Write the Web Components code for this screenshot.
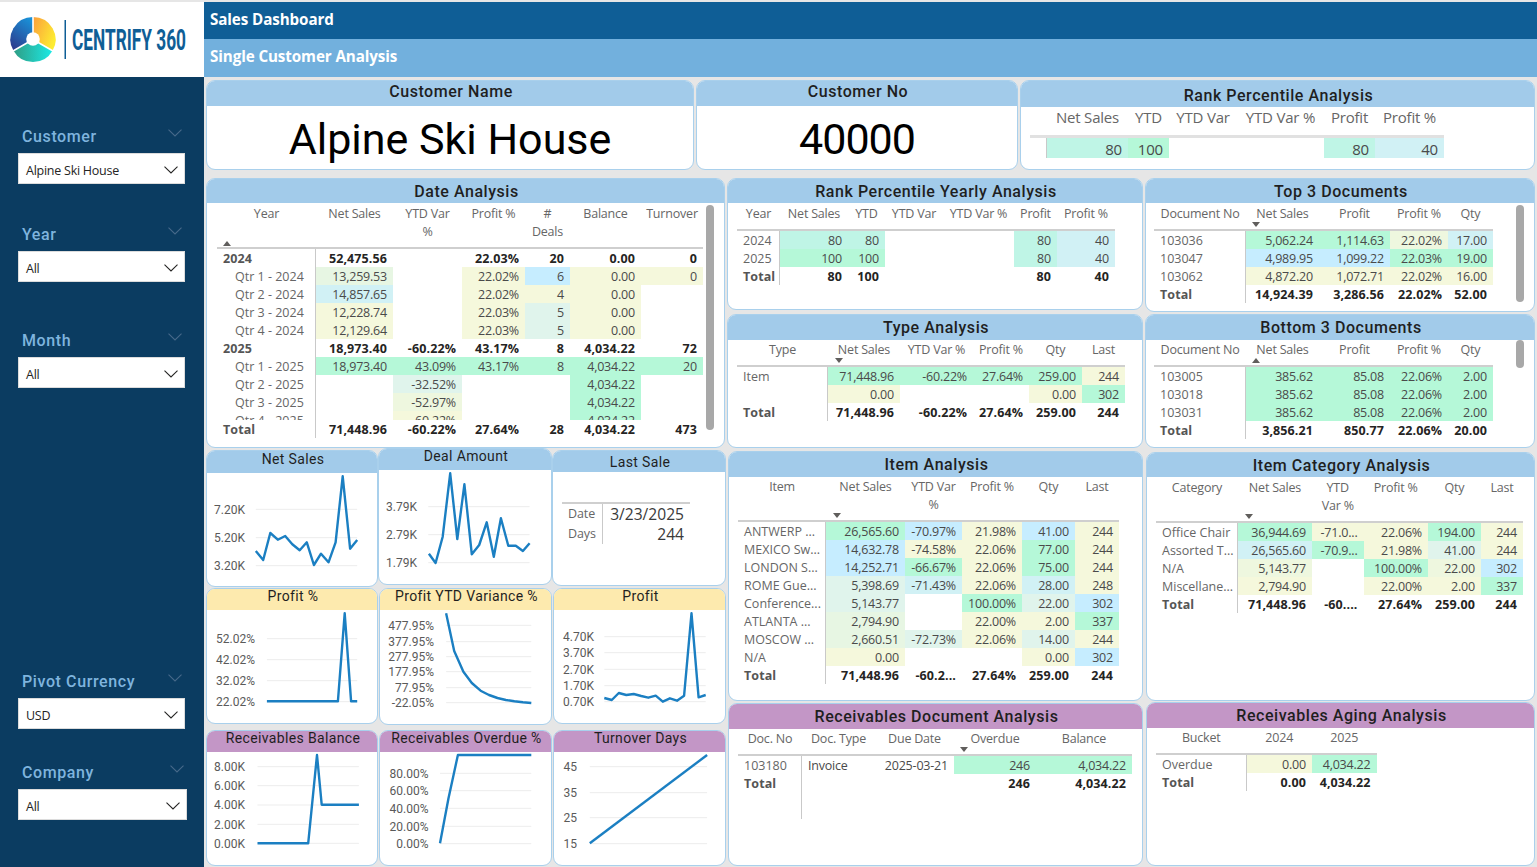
<!DOCTYPE html>
<html lang="en"><head><meta charset="utf-8"><title>Sales Dashboard</title>
<style>
html,body{margin:0;height:867px;width:1537px;overflow:hidden;background:#e6e6e6}
</style></head><body>
<dash-app>
  <side-bar slot="side">
    <slicer-box label="Customer" value="Alpine Ski House" style="margin-top:49px"></slicer-box>
    <slicer-box label="Year" value="All" style="margin-top:40px"></slicer-box>
    <slicer-box label="Month" value="All" style="margin-top:48px"></slicer-box>
    <slicer-box label="Pivot Currency" value="USD" style="margin-top:283px"></slicer-box>
    <slicer-box label="Company" value="All" wide style="margin-top:33px"></slicer-box>
  </side-bar>
  <title-band slot="title" main="Sales Dashboard" sub="Single Customer Analysis"></title-band>

  <dash-row slot="content" cols="488px 322px 515px" style="margin-top:3px;height:90px">
    <bi-card title="Customer Name" head="25" title-y="-2"><big-value>Alpine Ski House</big-value></bi-card>
    <bi-card title="Customer No" head="25" title-y="-2"><big-value style="letter-spacing:-1px">40000</big-value></bi-card>
    <bi-card title="Rank Percentile Analysis" head="26" title-y="1"><bi-table name="rank" style="margin:0 0 0 9px"></bi-table></bi-card>
  </dash-row>

  <dash-row slot="content" cols="519px 416px 390px" style="margin-top:8px;margin-left:0;height:688px">
    <dash-col>
      <bi-card title="Date Analysis" head="24" style="height:270px"><bi-table name="date" style="margin:0 0 0 10px" ></bi-table></bi-card>
      <chart-grid>
        <bi-card title="Net Sales" head="22" fs="14" title-y="-3" style="margin-top:2px;height:137px"><line-chart name="netSales"></line-chart></bi-card>
        <bi-card title="Deal Amount" head="21" fs="14" title-y="-4" style="height:137px"><line-chart name="deal"></line-chart></bi-card>
        <bi-card title="Last Sale" head="21" fs="14" style="margin-top:2px;height:136px"><last-sale></last-sale></bi-card>
        <bi-card title="Profit %" tone="yellow" head="21" fs="14" title-y="-4" style="margin-top:1px;height:136px"><line-chart name="profitPct"></line-chart></bi-card>
        <bi-card title="Profit YTD Variance %" tone="yellow" head="21" fs="14" title-y="-4" style="margin:1px 0 0 1px;height:137px"><line-chart name="ytdVar"></line-chart></bi-card>
        <bi-card title="Profit" tone="yellow" head="21" fs="14" title-y="-4" style="margin:1px 0 0 1px;height:136px"><line-chart name="profit"></line-chart></bi-card>
        <bi-card title="Receivables Balance" tone="purple" head="21" fs="14" title-y="-4" style="margin-top:5px;height:136px"><line-chart name="recvBal"></line-chart></bi-card>
        <bi-card title="Receivables Overdue %" tone="purple" head="21" fs="14" title-y="-4" style="margin:5px 0 0 1px;height:136px"><line-chart name="overdue"></line-chart></bi-card>
        <bi-card title="Turnover Days" tone="purple" head="21" fs="14" title-y="-4" style="margin:5px 0 0 1px;height:136px"><line-chart name="turnover"></line-chart></bi-card>
      </chart-grid>
    </dash-col>
    <dash-col>
      <bi-card title="Rank Percentile Yearly Analysis" head="24" style="height:132px"><bi-table name="yearly" style="margin:0 0 0 9px"></bi-table></bi-card>
      <bi-card title="Type Analysis" head="25" style="margin-top:4px;height:134px"><bi-table name="type" style="margin:0 0 0 9px"></bi-table></bi-card>
      <bi-card title="Item Analysis" head="25" style="margin:3px 0 0 1px;height:250px"><bi-table name="item" style="margin:0 0 0 9px"></bi-table></bi-card>
      <bi-card title="Receivables Document Analysis" tone="purple" head="25" style="margin:2px 0 0 1px;height:163px"><bi-table name="recvDoc" style="margin:0 0 0 9px"></bi-table></bi-card>
    </dash-col>
    <dash-col>
      <bi-card title="Top 3 Documents" head="24" style="height:134px"><bi-table name="top3" style="margin:0 0 0 8px"></bi-table></bi-card>
      <bi-card title="Bottom 3 Documents" head="25" style="margin-top:2px;height:134px"><bi-table name="bottom3" style="margin:0 0 0 8px"></bi-table></bi-card>
      <bi-card title="Item Category Analysis" head="24" style="margin:4px 0 0 1px;height:249px"><bi-table name="category" style="margin:0 0 0 9px"></bi-table></bi-card>
      <bi-card title="Receivables Aging Analysis" tone="purple" head="25" style="margin:1px 0 0 1px;height:164px"><bi-table name="aging" style="margin:0 0 0 9px"></bi-table></bi-card>
    </dash-col>
  </dash-row>
</dash-app>

<script>
const TITLE_FONT='Roboto, "Liberation Sans", sans-serif';
const BODY_FONT='"Open Sans", "Noto Sans", sans-serif';
const PAL={g:'#b5f8d8',t:'#bff5e6',b:'#c6edff',c:'#d1f1f5',m:'#e0f4ec',e:'#e7f6e3',n:'#eef7df',y:'#f5f8dc'};

const TABLES={
 date:{cols:[99,77,69,63,45,71,62],hh:46,hp:2,arB:1,bodyH:171,arrow:[0,'up',6],sb:[489,2,8,225],
  head:['Year','Net Sales','YTD Var<br>%','Profit %','#<br>Deals','Balance','Turnover'],
  rows:['*2024;52,475.56;;22.03%;20;0.00;0','>Qtr 1 - 2024;13,259.53:e;;22.02%:y;6:b;0.00:y;0:y','>Qtr 2 - 2024;14,857.65:c;;22.02%:y;4:y;0.00:y;','>Qtr 3 - 2024;12,228.74:y;;22.03%:y;5:m;0.00:y;','>Qtr 4 - 2024;12,129.64:y;;22.03%:y;5:m;0.00:y;',
   '*2025;18,973.40;-60.22%;43.17%;8;4,034.22;72','>Qtr 1 - 2025;18,973.40:g;43.09%:g;43.17%:g;8:g;4,034.22:g;20:g','>Qtr 2 - 2025;;-32.52%:m;;;4,034.22:g;','>Qtr 3 - 2025;;-52.97%:n;;;4,034.22:g;','>Qtr 4 - 2025;;-60.22%:y;;;4,034.22:g;'],
  total:'Total;71,448.96;-60.22%;27.64%;28;4,034.22;473'},
 rank:{cols:[17,81,41,68,87,51,69],hh:31,hp:0,fs:15,rh:20,lineC:'#e1e1e1',lineW:3,noSep:1,
  head:['','Net Sales','YTD','YTD Var','YTD Var %','Profit','Profit %'],
  rows:[';80:t;100:g;;;80:t;40:c']},
 yearly:{cols:[43,68,37,58,71,43,58],hh:28,hp:2,
  head:['Year','Net Sales','YTD','YTD Var','YTD Var %','Profit','Profit %'],
  rows:['2024;80:t;80:t;;;80:t;40:c','2025;100:g;100:g;;;80:t;40:c'],total:'Total;80;100;;;80;40'},
 top3:{cols:[92,73,71,58,45],hh:28,hp:2,arrow:[1,'down',6],sb:[362,2,8,97],
  head:['Document No','Net Sales','Profit','Profit %','Qty'],
  rows:['103036;5,062.24:g;1,114.63:g;22.02%:n;17.00:c','103047;4,989.95:b;1,099.22:b;22.03%:g;19.00:g','103062;4,872.20:y;1,072.71:y;22.02%:y;16.00:y'],total:'Total;14,924.39;3,286.56;22.02%;52.00'},
 bottom3:{cols:[92,73,71,58,45],hh:27,arrow:[1,'up',6],sb:[362,0,8,28],
  head:['Document No','Net Sales','Profit','Profit %','Qty'],
  rows:['103005;385.62:g;85.08:g;22.06%:g;2.00:g','103018;385.62:g;85.08:g;22.06%:g;2.00:g','103031;385.62:g;85.08:g;22.06%:g;2.00:g'],total:'Total;3,856.21;850.77;22.06%;20.00'},
 type:{cols:[91,72,73,56,53,43],hh:27,arrow:[1,'down',7],
  head:['Type','Net Sales','YTD Var %','Profit %','Qty','Last'],
  rows:['Item;71,448.96:g;-60.22%:g;27.64%:g;259.00:g;244:y',';0.00:y;;;0.00:y;302:g'],total:'Total;71,448.96;-60.22%;27.64%;259.00;244'},
 item:{cols:[88,79,57,60,53,44],hh:45,arrow:[1,'down',7],
  head:['Item','Net Sales','YTD Var<br>%','Profit %','Qty','Last'],
  rows:['ANTWERP ...;26,565.60:g;-70.97%:b;21.98%:y;41.00:b;244:y','MEXICO Sw...;14,632.78:b;-74.58%:y;22.06%:y;77.00:g;244:y','LONDON S...;14,252.71:b;-66.67%:g;22.06%:y;75.00:g;244:y','ROME Gue...;5,398.69:m;-71.43%:c;22.06%:y;28.00:c;248:y','Conference...;5,143.77:m;;100.00%:g;22.00:m;302:b','ATLANTA ...;2,794.90:e;;22.00%:y;2.00:y;337:g','MOSCOW ...;2,660.51:e;-72.73%:m;22.06%:y;14.00:m;244:y','N/A;0.00:y;;;0.00:y;302:b'],
  total:'Total;71,448.96;-60.2...;27.64%;259.00;244'},
 category:{cols:[82,74,51.5,64.5,53,42],hh:46,hp:2,arrow:[1,'down',7],
  head:['Category','Net Sales','YTD<br>Var %','Profit %','Qty','Last'],
  rows:['Office Chair;36,944.69:g;-71.0...:y;22.06%:y;194.00:g;244:y','Assorted T...;26,565.60:c;-70.9...:g;21.98%:y;41.00:m;244:y','N/A;5,143.77:n;;100.00%:g;22.00:n;302:b','Miscellane...;2,794.90:y;;22.00%:y;2.00:y;337:g'],
  total:'Total;71,448.96;-60....;27.64%;259.00;244'},
 recvDoc:{cols:[64,73,79,82,96],hh:27,arrow:[3,'down',6],left:[1],extra:27,
  head:['Doc. No','Doc. Type','Due Date','Overdue','Balance'],
  rows:['103180;Invoice;2025-03-21;246:g;4,034.22:g'],total:'Total;;;246;4,034.22'},
 aging:{cols:[90.5,65.5,64.5],hh:27,
  head:['Bucket','2024','2025'],
  rows:['Overdue;0.00:y;4,034.22:g'],total:'Total;0.00;4,034.22'}
};

// chart coordinates are read off the reference: x = 200+zx/2.958, y = 445+zy/3
const Z=(zx,zy)=>[200+zx/2.958,445+zy/3];
const CHARTS={
 netSales:{box:[207,473,170,113],end:245,g:[165,465],l:[['7.20K',193],['5.20K',278],['3.20K',362]],
  p:[[165,318],[187,345],[208,264],[230,284],[252,273],[273,298],[295,316],[316,292],[337,360],[358,326],[380,352],[401,292],[422,94],[444,311],[465,285]]},
 deal:{box:[379,470,171,114],end:417,g:[675,975],l:[['3.79K',185],['2.79K',269],['1.79K',353]],
  p:[[677,326],[697,354],[718,275],[740,85],[761,282],[782,118],[804,328],[826,300],[848,232],[869,335],[890,220],[912,302],[934,302],[955,318],[975,295]]},
 profitPct:{box:[207,610,170,113],end:255,g:[198,465],l:[['52.02%',581],['42.02%',644],['32.02%',707],['22.02%',770]],
  p:[[198,769],[408,769],[428,505],[447,769],[465,769]]},
 ytdVar:{box:[380,610,170,114],end:434,g:[728,980],l:[['477.95%',541],['377.95%',590],['277.95%',635],['177.95%',680],['77.95%',728],['-22.05%',773]],
  p:[[728,505],[752,618],[779,680],[804,714],[830,737],[855,750],[880,759],[905,765],[930,769],[955,772],[980,774]]},
 profit:{box:[553,610,172,113],end:593,g:[1193,1493],l:[['4.70K',575],['3.70K',623],['2.70K',673],['1.70K',722],['0.70K',770]],
  p:[[1193,759],[1215,765],[1236,744],[1258,750],[1280,747],[1302,753],[1323,758],[1345,752],[1366,770],[1387,760],[1408,767],[1429,752],[1451,505],[1472,757],[1493,750]]},
 recvBal:{box:[207,752,170,113],end:245,g:[170,470],l:[['8.00K',965],['6.00K',1022],['4.00K',1080],['2.00K',1138],['0.00K',1195]],
  p:[[170,1195],[320,1195],[346,930],[360,1079],[470,1079]]},
 overdue:{box:[380,752,170,113],end:428.5,g:[710,980],l:[['80.00%',985],['60.00%',1037],['40.00%',1090],['20.00%',1144],['0.00%',1196]],
  p:[[710,1195],[735,1060],[763,930],[980,930]]},
 turnover:{box:[553,752,172,113],end:576,g:[1150,1497],l:[['45',965],['35',1043],['25',1118],['15',1196]],
  p:[[1150,1195],[1497,930]]}
};

class Base extends HTMLElement{
  html(s){this.attachShadow({mode:'open'}).innerHTML=s}
}
customElements.define('dash-app',class extends Base{connectedCallback(){this.html(`<style>
  :host{display:grid;grid-template-columns:204px 1fr;width:1537px;height:865px;margin-top:2px;background:#e6e6e6}
  .main{display:flex;flex-direction:column;min-width:0}
  .content{display:flex;flex-direction:column;padding-left:2px}
</style><slot name="side"></slot><div class="main"><slot name="title"></slot><div class="content"><slot name="content"></slot></div></div>`)}});

customElements.define('side-bar',class extends Base{connectedCallback(){this.html(`<style>
  :host{display:flex;flex-direction:column;background:#0b3c61;height:865px}
  .logo{background:#fff;height:75px;flex:none;display:block}
  svg{display:block}
  text{font-family:${TITLE_FONT};font-weight:700;fill:#0f5e96}
</style><div class="logo"><svg width="204" height="75" viewBox="0 2 204 75">
  <defs>
   <linearGradient id="a" x1="0.7" y1="0" x2="0.2" y2="1"><stop offset="0" stop-color="#1a8fd6"/><stop offset="1" stop-color="#2d3a8c"/></linearGradient>
   <linearGradient id="b" x1="0" y1="0" x2="1" y2="0.6"><stop offset="0" stop-color="#fb9e3c"/><stop offset="1" stop-color="#fdec32"/></linearGradient>
   <linearGradient id="c" x1="0" y1="0" x2="1" y2="0"><stop offset="0" stop-color="#2f9d84"/><stop offset="1" stop-color="#1ceae6"/></linearGradient>
  </defs>
  <path d="M33 39.5V17A22.5 22.5 0 0 0 13.5 50.8Z" fill="url(#a)"/>
  <path d="M33 39.5V17A22.5 22.5 0 0 1 52.5 50.8Z" fill="url(#b)"/>
  <path d="M33 39.5L13.5 50.8A22.5 22.5 0 0 0 52.5 50.8Z" fill="url(#c)"/>
  <path d="M33 17V39.5M33 39.5L13 51M33 39.5L53 51" stroke="#fff" stroke-width="1.6" fill="none"/>
  <circle cx="33" cy="39" r="6.8" fill="#fff"/>
  <rect x="64.5" y="20" width="1.5" height="39" fill="#0f5e96"/>
  <text x="72" y="50" font-size="29" textLength="114" lengthAdjust="spacingAndGlyphs">CENTRIFY 360</text>
</svg></div><slot></slot>`)}});

customElements.define('slicer-box',class extends Base{connectedCallback(){
  const w=this.hasAttribute('wide')?169:167;
  this.html(`<style>
  :host{display:flex;flex-direction:column;flex:none;padding-left:18px}
  .lab{height:20px;display:flex;align-items:center;justify-content:space-between;width:${w-4}px;padding-left:4px;
    font:500 16px ${TITLE_FONT};letter-spacing:.6px;color:#7fb4de}
  .lab svg{margin-top:-7px;margin-right:3px}
  .box{margin-top:7px;height:31px;width:${w}px;box-sizing:border-box;background:#fff;border:1px solid #dcdcdc;display:flex;align-items:center;justify-content:space-between;padding:3px 6px 0 7px;
    font:12.5px ${BODY_FONT};letter-spacing:-.25px;color:#252423}
  svg{display:block}
</style><div class="lab"><span>${this.getAttribute('label')}</span><svg width="14" height="8" viewBox="0 0 14 8"><path d="M.5.7 7 7l6.500-6.300" fill="none" stroke="#47698a" stroke-width="1.100"/></svg></div>
<div class="box"><span>${this.getAttribute('value')}</span><svg width="14" height="8" viewBox="0 0 14 8"><path d="M.5.7 7 7l6.500-6.300" fill="none" stroke="#252423" stroke-width="1.100"/></svg></div>`)}});

customElements.define('title-band',class extends Base{connectedCallback(){this.html(`<style>
  :host{display:block;font:700 15.2px ${BODY_FONT};color:#fff;letter-spacing:-.1px}
  div{display:flex;align-items:center;padding:0 0 4px 6px;box-sizing:border-box}
  .a{height:37px;background:#0f5e96}
  .b{height:38px;background:#72b0dd}
</style><div class="a">${this.getAttribute('main')}</div><div class="b">${this.getAttribute('sub')}</div>`)}});

customElements.define('dash-row',class extends Base{connectedCallback(){this.html(`<style>
  :host{display:grid;gap:2px;grid-template-columns:${this.getAttribute('cols')};flex:none}
</style><slot></slot>`)}});
customElements.define('dash-col',class extends Base{connectedCallback(){this.html(`<style>
  :host{display:flex;flex-direction:column;min-width:0}
</style><slot></slot>`)}});
customElements.define('chart-grid',class extends Base{connectedCallback(){this.html(`<style>
  :host{display:grid;grid-template-columns:172px 174px 174px;grid-template-rows:139px 138px 141px}
</style><slot></slot>`)}});

customElements.define('bi-card',class extends Base{connectedCallback(){
  const tone={blue:'#a2cbea',yellow:'#fdeaae',purple:'#c396c6'}[this.getAttribute('tone')||'blue'];
  const head=this.getAttribute('head')||24, fs=+(this.getAttribute('fs')||16), ty=+(this.getAttribute('title-y')||0);
  this.html(`<style>
  :host{display:flex;flex-direction:column;box-sizing:border-box;background:#fff;border:1px solid #a9d0ec;border-radius:9px;overflow:hidden;min-width:0;position:relative}
  .h{flex:none;height:${head}px;background:${tone};display:flex;align-items:center;justify-content:center;
    font:${fs<15?400:500} ${fs}px ${TITLE_FONT};letter-spacing:${fs<15?.35:.55}px;color:#1f1f1f;white-space:nowrap;padding-left:2px;box-sizing:border-box}
  .h span{padding-top:${ty>0?ty*2:0}px;padding-bottom:${ty<0?-ty*2:0}px}
  .b{flex:1;min-height:0;position:relative}
</style><div class="h"><span>${this.getAttribute('title')}</span></div><div class="b"><slot></slot></div>`)}});

customElements.define('big-value',class extends Base{connectedCallback(){this.html(`<style>
  :host{display:flex;height:100%;box-sizing:border-box;padding-top:2px;align-items:center;justify-content:center;font:400 43px ${TITLE_FONT};color:#000;white-space:nowrap}
</style><slot></slot>`)}});

customElements.define('bi-table',class extends Base{connectedCallback(){
  const s=TABLES[this.getAttribute('name')];
  const cols=s.cols.map(c=>c+'px').join(' ');
  const left=new Set(s.left||[]);
  const rh=s.rh||18;
  const cell=(raw,i)=>{
    const [txt,c]=(raw||'').split(':');
    const cl=[i==0?'lab':'',left.has(i)?'lft':'val'].join(' ');
    const bg=c?`background:${PAL[c]}`:'';
    return `<div class="c ${cl}" style="${bg}">${txt}</div>`;
  };
  const row=(str,cls='')=>{
    let r=str,extra=cls;
    if(r[0]=='*'){r=r.slice(1);extra+=' bold'}
    if(r[0]=='>'){r=r.slice(1);extra+=' ind'}
    return `<div class="r ${extra}">${r.split(';').map((x,i)=>cell(x,i)).join('')}</div>`;
  };
  const hd=s.head.map((h,i)=>{
    const a=s.arrow&&s.arrow[0]==i?`<i class="ar ${s.arrow[1]}" style="left:${s.arrow[2]}px"></i>`:'';
    return `<div class="hc"><span>${h}</span>${a}</div>`;
  }).join('');
  const sb=s.sb?`<div class="sb" style="left:${s.sb[0]}px;top:${s.sb[1]}px;width:${s.sb[2]}px;height:${s.sb[3]}px"></div>`:'';
  this.html(`<style>
  :host{display:block;position:relative;font:${s.fs||12.5}px/${rh}px ${BODY_FONT};color:#4a4a4a;width:${s.cols.reduce((a,b)=>a+b,0)}px}
  .r{display:grid;grid-template-columns:${cols}}
  .head{display:grid;grid-template-columns:${cols};height:${s.hh}px;padding-top:${s.hp===undefined?1:s.hp}px;box-sizing:border-box;border-bottom:${s.lineW||2}px solid ${s.lineC||'#cfcfcf'};color:#666;letter-spacing:-.2px}
  .hc{text-align:center;position:relative;min-width:0;white-space:nowrap}
  .hc span{display:block}
  .ar{position:absolute;bottom:${s.arB===undefined?2:s.arB}px;width:0;height:0;border-left:4.500px solid transparent;border-right:4.500px solid transparent}
  .ar.up{border-bottom:5px solid #605e5c}
  .ar.down{border-top:5px solid #605e5c}
  .body{overflow:hidden;${s.bodyH?`height:${s.bodyH}px`:''}}
  .c{height:${rh}px;line-height:${rh+2}px;white-space:nowrap;overflow:hidden;min-width:0;letter-spacing:-.2px}
  .val{text-align:right;padding-right:6px}
  .lft{text-align:left;padding-left:6px}
  .lab{text-align:left;padding-left:6px;color:#666;letter-spacing:0;${s.noSep?'':'border-right:1.500px solid #c9c9c9;'}}
  .ind .lab{padding-left:18px}
  .bold .c,.total .c{font-weight:700;color:#252423;letter-spacing:.1px}
  .bold .lab,.total .lab{color:#555}
  .sp{height:${s.extra||0}px;width:${s.cols[0]}px;box-sizing:border-box;border-right:1.500px solid #c9c9c9}
  .sb{position:absolute;background:#a8a8a8;border-radius:4px}
  ${s.noSep?'.lab{padding:0;border-right:1.500px solid #c9c9c9;}':''}
</style><div class="head">${hd}</div><div class="body">${s.rows.map(r=>row(r)).join('')}</div>${s.total?row(s.total,'total'):''}${s.extra?'<div class="sp"></div>':''}${sb}`)}});

customElements.define('line-chart',class extends Base{connectedCallback(){
  const d=CHARTS[this.getAttribute('name')];
  const [x,y,w,h]=d.box;
  const pts=d.p.map(p=>Z(p[0],p[1]).map(n=>n.toFixed(1)).join(',')).join(' ');
  const gx1=Z(d.g[0],0)[0],gx2=Z(d.g[1],0)[0];
  const grid=d.l.map(([t,zy])=>{const gy=Z(0,zy)[1];return `<line x1="${gx1}" x2="${gx2}" y1="${gy}" y2="${gy}"/>`}).join('');
  const labs=d.l.map(([t,zy])=>`<text x="${d.end}" y="${Z(0,zy)[1]+4.300}">${t}</text>`).join('');
  this.html(`<style>
  :host{display:block;width:${w}px;height:${h}px}
  svg{display:block;overflow:visible}
  line{stroke:#ededed;stroke-width:1}
  text{font:12px ${TITLE_FONT};fill:#5a5a5a;text-anchor:end}
  polyline{fill:none;stroke:#1b7fc2;stroke-width:2.400;stroke-linejoin:round}
</style><svg width="${w}" height="${h}" viewBox="${x} ${y} ${w} ${h}">${grid}${labs}<polyline points="${pts}"/></svg>`)}});

customElements.define('last-sale',class extends Base{connectedCallback(){this.html(`<style>
  :host{display:block;margin:30px 0 0 9px;width:128px;border-top:2px solid #cfcfcf;font:12.5px/20px ${BODY_FONT};letter-spacing:-.1px;color:#666;box-sizing:border-box}
  .g{display:grid;grid-template-columns:41px 87px;grid-auto-rows:20px}
  .k{padding-left:6px;border-right:1.500px solid #c9c9c9}
  .v{font-size:15.6px;color:#3a3a3a;text-align:right;padding-right:6px;letter-spacing:0}
</style><div class="g"><div class="k">Date</div><div class="v">3/23/2025</div><div class="k">Days</div><div class="v">244</div></div>`)}});
</script>
</body></html>
